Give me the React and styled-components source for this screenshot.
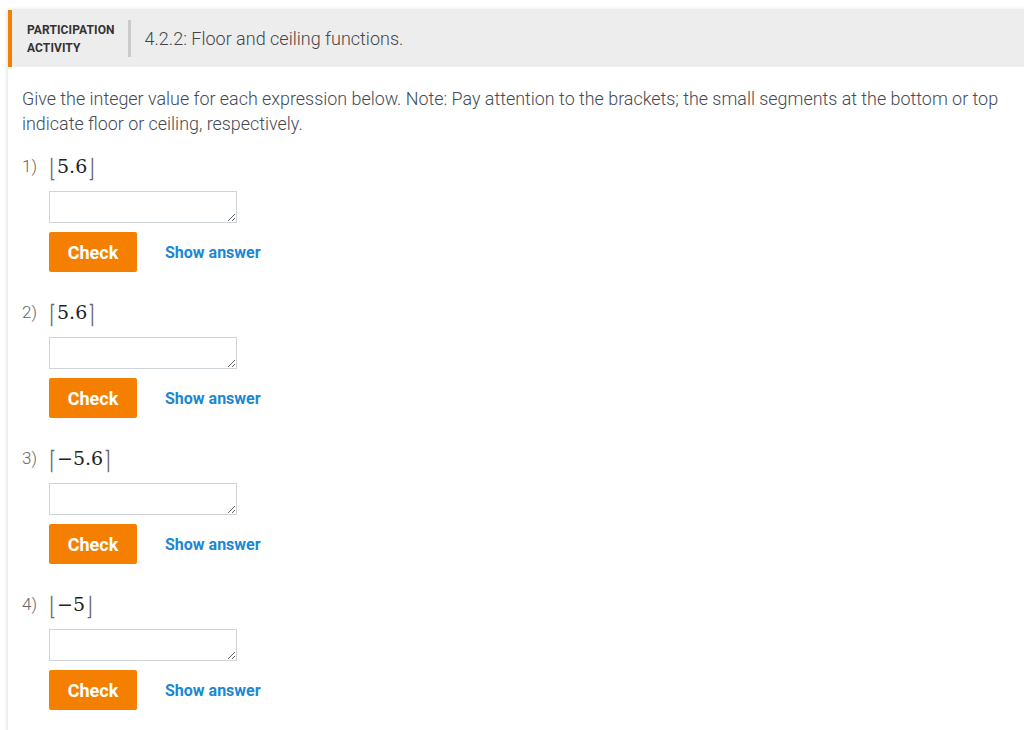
import React from 'react';
import styled, { createGlobalStyle } from 'styled-components';

const GlobalStyle = createGlobalStyle`
    html, body {
        margin: 0;
        padding: 0;
        background-color: #fff;
        font-family: Roboto, "Liberation Sans", sans-serif;
    }
`;

const Card = styled.div`
    margin: 10px -20px 0 8px;
    background-color: #fff;
    box-shadow: 0 0 4px rgba(0, 0, 0, 0.18);
    min-height: 740px;
`;

const Header = styled.div`
    display: flex;
    align-items: center;
    height: 57px;
    background-color: #ededed;
    border-left: 4px solid #f57f00;
    padding-left: 15px;
`;

const Label = styled.div`
    font-size: 12px;
    font-weight: 700;
    line-height: 18px;
    color: #333;
    text-transform: uppercase;
    letter-spacing: 0.1px;
    padding-right: 13px;
    border-right: 3px solid #cbcbcb;
    height: 37px;
    display: flex;
    flex-direction: column;
    justify-content: center;
`;

const Title = styled.h2`
    margin: 0 0 0 14px;
    font-size: 18px;
    font-weight: 300;
    color: #454545;
`;

const Body = styled.div`
    padding: 19px 0 0 14px;
`;

const Intro = styled.p`
    margin: 0;
    width: 992px;
    font-size: 17.9px;
    font-weight: 300;
    line-height: 25px;
    color: #434a54;
`;

const Question = styled.div`
    margin-top: ${({ first }) => (first ? '18px' : '28px')};
`;

const Prompt = styled.div`
    display: flex;
    align-items: center;
    height: 24px;
`;

const Number = styled.span`
    width: 27px;
    font-size: 17px;
    font-weight: 300;
    color: #666;
`;

const Math = styled.span`
    display: flex;
    align-items: center;
    font-family: "DejaVu Serif", "Liberation Serif", serif;
    font-size: 19px;
    color: #222;
`;

const Bracket = styled.span`
    display: inline-block;
    font-family: "DejaVu Serif", serif;
    font-size: 18px;
    color: #6a6a6a;
    transform: scale(0.8, 1.4) translateY(1px);
    margin: ${({ side }) => (side === 'open' ? '0 1px 0 0' : '0 0 0 1px')};
`;

const Answer = styled.div`
    padding-left: 27px;
    margin-top: 13px;
`;

const Input = styled.textarea`
    display: block;
    box-sizing: border-box;
    width: 188px;
    height: 32px;
    border: 1px solid #cfd4d8;
    border-radius: 0;
    padding: 4px;
    font-family: Roboto, sans-serif;
    font-size: 14px;
    resize: both;
`;

const Actions = styled.div`
    display: flex;
    align-items: center;
    margin-top: 9px;
`;

const CheckButton = styled.button`
    width: 88px;
    height: 40px;
    border: none;
    border-radius: 2px;
    background-color: #f57f00;
    color: #fff;
    font-family: Roboto, sans-serif;
    font-size: 18px;
    font-weight: 700;
    cursor: pointer;
`;

const ShowAnswer = styled.a`
    margin-left: 28px;
    font-size: 16px;
    font-weight: 700;
    color: #1b87d4;
    cursor: pointer;
`;

const questions = [
    { open: '⌊', close: '⌋', value: '5.6' },
    { open: '⌈', close: '⌉', value: '5.6' },
    { open: '⌈', close: '⌉', value: '−5.6' },
    { open: '⌊', close: '⌋', value: '−5' }
];

export default function App() {
    return (
        <>
            <GlobalStyle />
            <Card>
                <Header>
                    <Label>
                        <span>Participation</span>
                        <span>Activity</span>
                    </Label>
                    <Title>4.2.2: Floor and ceiling functions.</Title>
                </Header>
                <Body>
                    <Intro>
                        Give the integer value for each expression below. Note: Pay attention to the brackets; the small segments at the bottom or top indicate floor or ceiling, respectively.
                    </Intro>
                    {questions.map((q, i) => (
                        <Question key={i} first={i === 0}>
                            <Prompt>
                                <Number>{i + 1})</Number>
                                <Math>
                                    <Bracket side='open'>{q.open}</Bracket>
                                    {q.value}
                                    <Bracket side='close'>{q.close}</Bracket>
                                </Math>
                            </Prompt>
                            <Answer>
                                <Input />
                                <Actions>
                                    <CheckButton>Check</CheckButton>
                                    <ShowAnswer>Show answer</ShowAnswer>
                                </Actions>
                            </Answer>
                        </Question>
                    ))}
                </Body>
            </Card>
        </>
    );
}
